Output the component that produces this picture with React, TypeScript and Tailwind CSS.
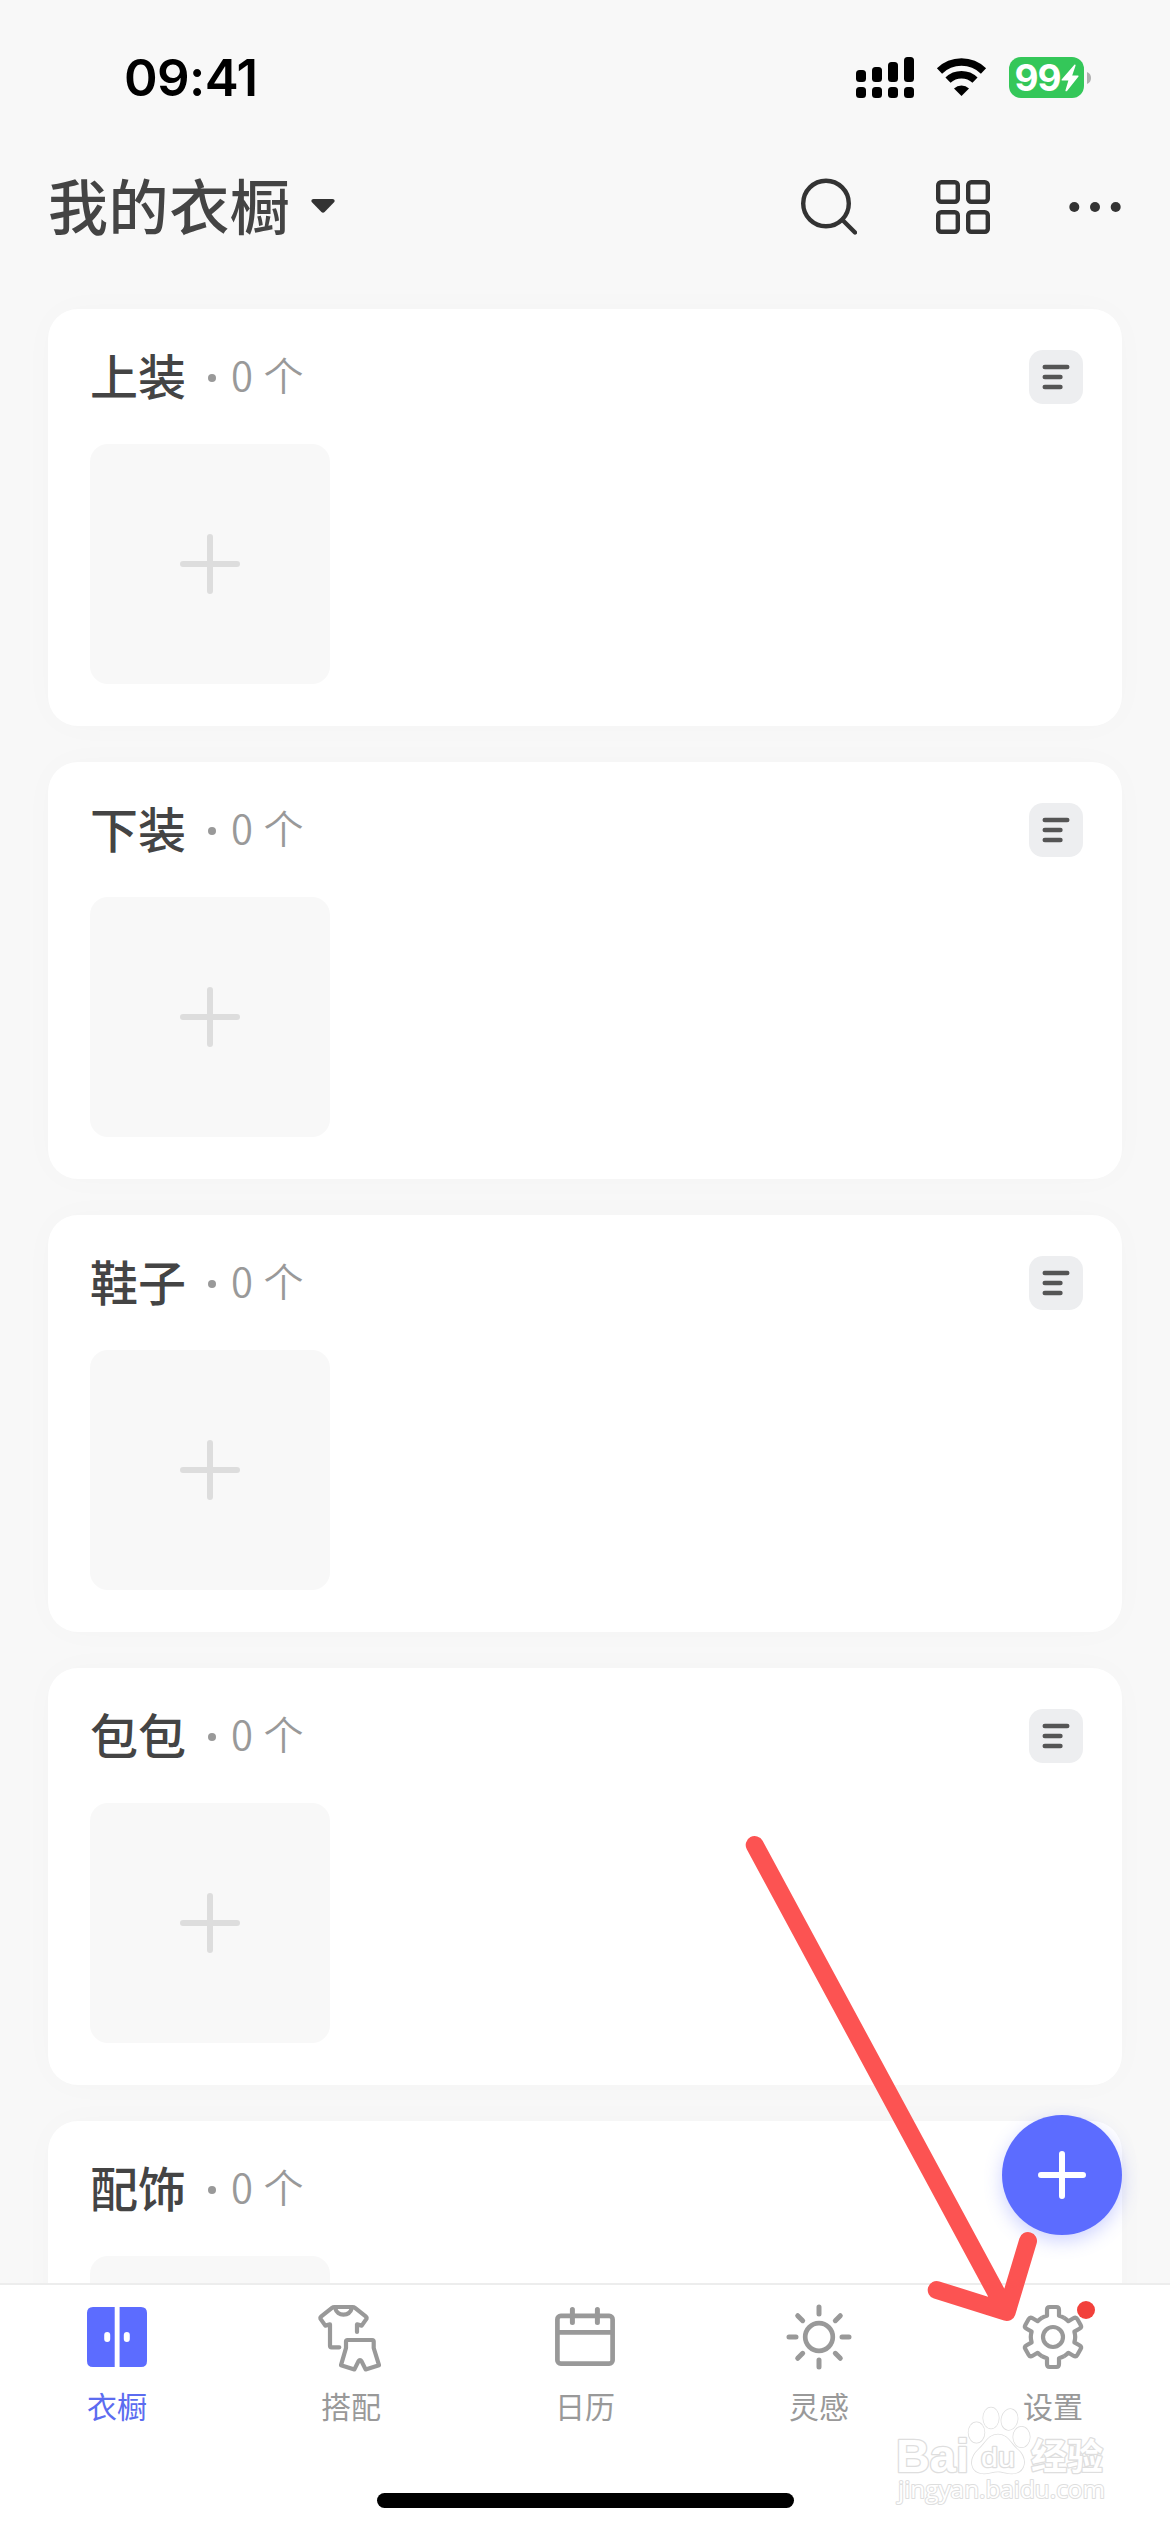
import React, { useState } from 'react';

interface Category {
  id: string;
  name: string;
  count: number;
}

const categories: Category[] = [
  { id: 'tops', name: '上装', count: 0 },
  { id: 'bottoms', name: '下装', count: 0 },
  { id: 'shoes', name: '鞋子', count: 0 },
  { id: 'bags', name: '包包', count: 0 },
  { id: 'accessories', name: '配饰', count: 0 },
];

const StatusBar = () => (
  <div className="flex h-[155px] shrink-0 items-center justify-between pl-[124px] pr-[78px]">
    <span className="font-['Inter',sans-serif] text-[51px] font-semibold leading-none tracking-[-0.6px] text-black">
      09:41
    </span>
    <div className="flex items-center">
      <svg width="58" height="41" viewBox="0 0 58 41" fill="black">
        <rect x="0" y="13" width="10" height="12" rx="3.5" />
        <rect x="16" y="10" width="10" height="15" rx="3.5" />
        <rect x="32" y="5" width="10" height="20" rx="3.5" />
        <rect x="48" y="0" width="10" height="25" rx="3.5" />
        <rect x="0" y="30" width="10" height="11" rx="3.5" />
        <rect x="16" y="30" width="10" height="11" rx="3.5" />
        <rect x="32" y="30" width="10" height="11" rx="3.5" />
        <rect x="48" y="30" width="10" height="11" rx="3.5" />
      </svg>
      <svg className="ml-[22px]" width="51" height="41" viewBox="0 0 51 41" fill="none">
        <path d="M3.5 14A31.5 31.5 0 0 1 47.5 14" stroke="black" strokeWidth="7.4" />
        <path d="M12 23.2A19.5 19.5 0 0 1 39 23.2" stroke="black" strokeWidth="7.4" />
        <path d="M25.5 39 18 31.4A11 11 0 0 1 33 31.4Z" fill="black" />
      </svg>
      <div className="ml-[22px] flex h-[41px] w-[75px] items-center justify-center rounded-xl bg-[#34c759]">
        <span className="font-['Inter',sans-serif] text-[37px] font-bold leading-none tracking-[-1px] text-white">99</span>
        <svg width="18" height="28" viewBox="0 0 18 28" fill="white">
          <path d="M13.6.6 0.6 15.4Q0 16.4 1.2 16.4H7.4L4.4 26.4Q4.6 27.9 6 27L17.5 12.6Q18 11.4 16.8 11.4H11.2L14.6 1.4Q14.5.2 13.6.6Z" />
        </svg>
      </div>
      <svg className="ml-[3px]" width="5" height="14" viewBox="0 0 5 14" fill="#b0b0b0">
        <path d="M0 1Q4 2.5 4 7T0 13Z" />
      </svg>
    </div>
  </div>
);

const Header = () => (
  <header className="flex h-[103px] shrink-0 items-center justify-between pl-12 pr-[49px]">
    <button className="flex items-center">
      <span className="-mt-1.5 text-[60px] font-medium leading-none tracking-[0.6px] text-[#444]">我的衣橱</span>
      <svg className="-mt-0.5 ml-[21px]" width="24" height="14" viewBox="0 0 24 14" fill="#333">
        <path d="M2.5 0H21.5Q25 .6 22.8 3.6L13.6 13Q12 14.4 10.4 13L1.2 3.6Q-1 .6 2.5 0Z" />
      </svg>
    </button>
    <div className="flex items-center">
      <svg width="56" height="58" viewBox="0 0 56 58" fill="none" stroke="#333" strokeWidth="4.4">
        <circle cx="25" cy="25.5" r="22.8" />
        <path d="M41.5 42 54 54.5" strokeLinecap="round" />
      </svg>
      <svg className="ml-[79px]" width="54" height="54" viewBox="0 0 54 54" fill="none" stroke="#333" strokeWidth="4.4">
        <rect x="2.2" y="2.2" width="19.6" height="19.6" rx="3" />
        <rect x="32.2" y="2.2" width="19.6" height="19.6" rx="3" />
        <rect x="2.2" y="32.2" width="19.6" height="19.6" rx="3" />
        <rect x="32.2" y="32.2" width="19.6" height="19.6" rx="3" />
      </svg>
      <svg className="ml-[79px]" width="52" height="10" viewBox="0 0 52 10" fill="#333">
        <circle cx="5.3" cy="5" r="5" />
        <circle cx="26" cy="5" r="5" />
        <circle cx="46.7" cy="5" r="5" />
      </svg>
    </div>
  </header>
);

const CategoryCard = ({ category }: { category: Category }) => (
  <section className="h-[417px] shrink-0 rounded-[30px] bg-white pl-[42px] pr-[39px] pt-[41px] shadow-[0_0_36px_rgba(0,0,0,0.02)]">
    <div className="flex h-[54px] items-center justify-between">
      <div className="-mt-1.5 flex items-center">
        <h2 className="text-[48px] font-medium leading-[54px] text-[#444]">{category.name}</h2>
        <span className="ml-[22px] mt-2 h-2 w-2 rounded-full bg-[#999]" />
        <span className="ml-[15px] text-[40px] font-[350] leading-[54px] tracking-[0.8px] text-[#999]">{category.count} 个</span>
      </div>
      <button className="flex h-[54px] w-[54px] items-center justify-center rounded-[14px] bg-[#edeef0]">
        <svg width="28" height="26" viewBox="0 0 28 26" fill="none" stroke="#555" strokeWidth="4.6" strokeLinecap="round">
          <path d="M2.8 3H25.2M2.8 13H18.4M2.8 23H18.4" />
        </svg>
      </button>
    </div>
    <button className="mt-10 flex h-60 w-60 items-center justify-center rounded-[18px] bg-[#f8f8f8]">
      <svg width="60" height="60" viewBox="0 0 60 60" stroke="#ddd" strokeWidth="6" strokeLinecap="round">
        <path d="M3 30H57M30 3V57" />
      </svg>
    </button>
  </section>
);

const WardrobeIcon = () => (
  <svg width="72" height="72" viewBox="0 0 72 72" fill="#5c6cff">
    <path d="M12 6H33.7V66H12Q6 66 6 60V12Q6 6 12 6ZM38.6 6H60Q66 6 66 12V60Q66 66 60 66H38.6Z" />
    <rect x="23.2" y="31" width="6" height="10" rx="3" fill="white" />
    <rect x="42.8" y="31" width="6" height="10" rx="3" fill="white" />
  </svg>
);

const OutfitIcon = () => (
  <svg width="72" height="72" viewBox="0 0 72 72" fill="none" stroke="#999" strokeWidth="4.2" strokeLinecap="round" strokeLinejoin="round">
    <path d="M24.3 46.3H16.6Q15 46.3 15 44.7V23.4L10.3 24.6 5.4 17.6Q5 16.4 6 15.6L17 6.8Q18 6 19.4 6H37.6Q39 6 40 6.8L51 15.6Q52 16.4 51.6 17.6L46.7 24.6 42 23.4V31" />
    <path d="M20 6.8C22.4 16 34.4 16 37 6.8" />
    <path d="M32.6 39H57.2Q58.7 39 58.7 40.6V47L64 64.2 50.6 68.4 46.6 60.4Q45 57.6 43.4 60.4L39.4 68.4 26 64.2 31 47V40.6Q31 39 32.6 39Z" />
  </svg>
);

const CalendarIcon = () => (
  <svg width="72" height="72" viewBox="0 0 72 72" fill="none" stroke="#999" strokeWidth="4.7">
    <rect x="8.4" y="14.8" width="55.2" height="47.8" rx="3.4" />
    <path d="M8 31.3H64" />
    <path d="M23.4 8.5V21.5M48.4 8.5V21.5" strokeWidth="5" strokeLinecap="round" />
  </svg>
);

const SunIcon = () => (
  <svg width="72" height="72" viewBox="0 0 72 72" fill="none" stroke="#999" strokeWidth="5" strokeLinecap="round">
    <circle cx="36" cy="36" r="13.8" strokeWidth="4.7" />
    <path d="M36 6V13M36 59V66M6 36H13M59 36H66M14.7 14.7 19.7 19.7M52.3 52.3 57.3 57.3M57.3 14.7 52.3 19.7M19.7 52.3 14.7 57.3" />
  </svg>
);

const SettingsIcon = () => (
  <svg width="72" height="72" viewBox="0 0 72 72" fill="none" stroke="#999" strokeWidth="4.2" strokeLinejoin="round">
    <circle cx="36" cy="36" r="10" />
    {[0, 60, 120, 180, 240, 300].map((angle) => (
      <path
        key={angle}
        transform={`translate(36 36) rotate(${angle})`}
        d="M-11.2 -19.2A22.2 22.2 0 0 1 -6 -21.2V-27Q-6 -30 -3.4 -30H3.4Q6 -30 6 -27V-21.2A22.2 22.2 0 0 1 11.2 -19.2"
      />
    ))}
  </svg>
);

const tabs = [
  { id: 'wardrobe', label: '衣橱', icon: <WardrobeIcon /> },
  { id: 'outfit', label: '搭配', icon: <OutfitIcon /> },
  { id: 'calendar', label: '日历', icon: <CalendarIcon /> },
  { id: 'ideas', label: '灵感', icon: <SunIcon /> },
  { id: 'settings', label: '设置', icon: <SettingsIcon />, badge: true },
];

const Watermark = () => (
  <svg
    className="pointer-events-none absolute bottom-[20px] right-[56px]"
    width="224"
    height="112"
    viewBox="0 0 224 112"
    fill="white"
    stroke="#dedede"
    strokeWidth="2.6"
    strokeLinejoin="round"
    paintOrder="stroke"
  >
    <text x="6" y="71.5" fontFamily="Liberation Sans, sans-serif" fontWeight="700" fontSize="46" textLength="73" lengthAdjust="spacingAndGlyphs">Bai</text>
    <g strokeWidth="1.5">
      <ellipse cx="86.5" cy="32.5" rx="8" ry="10.3" />
      <ellipse cx="101" cy="18" rx="7.8" ry="10.5" />
      <ellipse cx="119.5" cy="19.5" rx="8" ry="10.5" transform="rotate(12 119.5 19.5)" />
      <ellipse cx="131.5" cy="37" rx="8.3" ry="10.3" />
      <path d="M108 34.5C118 34.5 120 43 127 49C138 58 136 73 122 73.5C116 73.5 113 71.5 108 71.5S99 73.5 94 73.5C80 73 78 59 89 49C96 43 98 34.5 108 34.5Z" />
    </g>
    <text x="91" y="67" fontFamily="Liberation Sans, sans-serif" fontSize="28" textLength="34" lengthAdjust="spacingAndGlyphs">du</text>
    <text x="141" y="70" fontFamily="Noto Sans CJK SC, sans-serif" fontWeight="700" fontSize="36">经验</text>
    <text x="8" y="98" fontFamily="Open Sans, sans-serif" fontSize="24" textLength="207" lengthAdjust="spacingAndGlyphs" strokeWidth="2">jingyan.baidu.com</text>
  </svg>
);

const App = () => {
  const [activeTab, setActiveTab] = useState('wardrobe');

  return (
    <div className="relative flex h-[2532px] w-[1170px] flex-col overflow-hidden bg-[#f8f8f8] font-['Noto_Sans_CJK_SC',sans-serif]">
      <StatusBar />
      <Header />

      <main className="flex min-h-0 flex-1 flex-col gap-9 overflow-hidden px-12 pt-[51px]">
        {categories.map((category) => (
          <CategoryCard key={category.id} category={category} />
        ))}
      </main>

      <nav className="flex h-[249px] shrink-0 flex-col items-center border-t-2 border-[#ededed] bg-white">
        <div className="flex w-full pt-4">
          {tabs.map((tab) => (
            <button key={tab.id} onClick={() => setActiveTab(tab.id)} className="flex flex-1 flex-col items-center">
              <span className="relative">
                {tab.icon}
                {tab.badge && <span className="absolute -right-1.5 top-0 h-[18px] w-[18px] rounded-full bg-[#f2413b]" />}
              </span>
              <span className={`mt-3.5 text-[30px] leading-9 ${activeTab === tab.id ? 'text-[#5c6cf0]' : 'text-[#999]'}`}>
                {tab.label}
              </span>
            </button>
          ))}
        </div>
        <div className="mb-6 mt-auto h-[15px] w-[417px] rounded-full bg-black" />
      </nav>

      {/* Floating add button */}
      <button className="absolute bottom-[297px] right-12 flex h-[120px] w-[120px] items-center justify-center rounded-full bg-[#5c6cff] shadow-[0_6px_18px_rgba(92,108,255,0.3)]">
        <svg width="48" height="48" viewBox="0 0 48 48" stroke="white" strokeWidth="6" strokeLinecap="round">
          <path d="M3 24H45M24 3V45" />
        </svg>
      </button>

      {/* Pointer to the settings tab */}
      <svg
        className="pointer-events-none absolute left-[740px] top-[1830px]"
        width="310"
        height="500"
        viewBox="0 0 310 500"
        fill="none"
        stroke="#fc5352"
        strokeWidth="18"
        strokeLinecap="round"
        strokeLinejoin="round"
      >
        <path d="M14.7 15 266.7 482M196.7 460 266.7 482 288 411" />
      </svg>

      <Watermark />
    </div>
  );
};

export default App;
